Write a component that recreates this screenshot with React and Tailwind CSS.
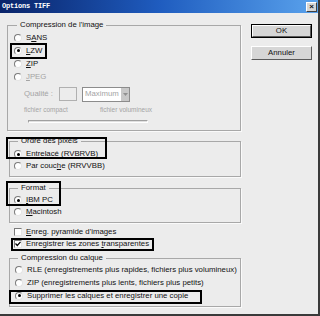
import React from "react";

function Radio({ checked, disabled, children }) {
  return (
    <div className={`flex items-center h-full gap-[4px] ${disabled ? "text-[#a4a4a4]" : ""}`}>
      <span className="w-[8px] h-[8px] shrink-0 rounded-full border border-t-[#7a7a7a] border-l-[#7a7a7a] border-r-[#e4e4e4] border-b-[#e4e4e4] bg-white flex items-center justify-center">
        {checked && <span className="w-[3px] h-[3px] rounded-full bg-black" />}
      </span>
      <span className="whitespace-nowrap">{children}</span>
    </div>
  );
}

function Check({ checked, children }) {
  return (
    <div className="flex items-center h-full gap-[4px]">
      <span className="w-[8px] h-[8px] shrink-0 border border-t-[#7a7a7a] border-l-[#7a7a7a] border-r-[#e4e4e4] border-b-[#e4e4e4] bg-white flex items-center justify-center">
        {checked && (
          <svg width="6" height="6" viewBox="0 0 6 6">
            <path d="M0.5 2.5 L2.3 4.5 L5.5 0.8" fill="none" stroke="#000" strokeWidth="1.2" />
          </svg>
        )}
      </span>
      <span className="whitespace-nowrap">{children}</span>
    </div>
  );
}

function Group({ title, className, legendClass, children }) {
  return (
    <fieldset className={`border border-[#a8a8a8] shadow-[1px_1px_0_#fafafa] ${className}`}>
      <legend className={`px-[3px] leading-[10px] bg-[#ececec] ${legendClass}`}>{title}</legend>
      {children}
    </fieldset>
  );
}

function Button({ primary, children }) {
  return (
    <div className={`h-[14px] ${primary ? "border border-black" : ""}`}>
      <div className="h-full flex items-center justify-center bg-[#d6d6d6] border border-t-white border-l-white border-r-[#5a5a5a] border-b-[#5a5a5a]">
        {children}
      </div>
    </div>
  );
}

export default function App() {
  return (
    <div className="w-[320px] h-[316px] relative overflow-hidden bg-[#ececec] border-r-2 border-b-2 border-r-[#3a3a3a] border-b-[#3a3a3a] font-['Liberation_Sans',sans-serif] text-[7.8px] text-[#111] leading-none">
      {/* title bar */}
      <div className="h-[13px] flex items-center justify-between pl-[2px] pr-[1px] bg-gradient-to-r from-[#0a246a] via-[#1f5cbf] to-[#5aa2ec]">
        <span className="font-['Liberation_Mono',monospace] font-bold text-[7px] text-white tracking-[-0.2px]">Options TIFF</span>
        <span className="w-[11px] h-[10px] flex items-center justify-center bg-[#d6d6d6] border border-t-white border-l-white border-r-[#404040] border-b-[#404040] text-[8px] font-bold">×</span>
      </div>

      <div className="flex pt-[7px]">
        {/* left column */}
        <div className="w-[241px] flex flex-col">
          <Group title="Compression de l'image" className="ml-[7px] h-[111px] pl-[6px]" legendClass="ml-[3px]">
            <div className="flex flex-col pt-[1px]">
              <div className="h-[13px]"><Radio>S<u>A</u>NS</Radio></div>
              <div className="h-[13px]"><Radio checked><u>L</u>ZW</Radio></div>
              <div className="h-[13px]"><Radio><u>Z</u>IP</Radio></div>
              <div className="h-[13px]"><Radio disabled><u>J</u>PEG</Radio></div>
              <div className="h-[14px] mt-[4px] flex items-center pl-[10px] text-[#a4a4a4]">
                <span className="w-[35px]">Qualité :</span>
                <span className="w-[18px] h-[14px] border border-[#b0b0b0] bg-[#ececec]" />
                <span className="ml-[5px] w-[48px] h-[15px] flex border border-[#8c8c8c] bg-white">
                  <span className="flex-1 flex items-center pl-[2px]">Maximum</span>
                  <span className="w-[8px] bg-[#c8c8c8] flex items-center justify-center">
                    <svg width="5" height="3" viewBox="0 0 5 3"><path d="M0 0 H5 L2.5 3 Z" fill="#909090" /></svg>
                  </span>
                </span>
              </div>
              <div className="h-[10px] mt-[4px] flex items-center pl-[10px] text-[6.5px] text-[#a4a4a4]">
                <span className="w-[76px]">fichier compact</span>
                <span>fichier volumineux</span>
              </div>
              <div className="ml-[14px] mt-[5px] w-[120px] h-[3px] bg-[#e0e0e0] border border-t-[#a0a0a0] border-l-[#a0a0a0] border-r-white border-b-white" />
            </div>
          </Group>

          <Group title="Ordre des pixels" className="ml-[9px] mt-[5px] h-[41px] pl-[4px]" legendClass="ml-[4px]">
            <div className="flex flex-col pt-[2px]">
              <div className="h-[12px]"><Radio checked><u>E</u>ntrelacé (RVBRVB)</Radio></div>
              <div className="h-[12px]"><Radio>Par couc<u>h</u>e (RRVVBB)</Radio></div>
            </div>
          </Group>

          <Group title="Format" className="ml-[9px] mt-[6px] h-[40px] pl-[4px]" legendClass="ml-[4px]">
            <div className="flex flex-col pt-[1px]">
              <div className="h-[12px]"><Radio checked><u>I</u>BM PC</Radio></div>
              <div className="h-[12px]"><Radio><u>M</u>acintosh</Radio></div>
            </div>
          </Group>

          <div className="flex flex-col pl-[14px] pt-[3px]">
            <div className="h-[12px]"><Check><u>E</u>nreg. pyramide d'images</Check></div>
            <div className="h-[12px]"><Check checked>Enregistrer les zones <u>t</u>ransparentes</Check></div>
          </div>

          <Group title="Compression du calque" className="ml-[9px] mt-[3px] h-[54px] pl-[5px]" legendClass="ml-[3px]">
            <div className="flex flex-col pt-[1px]">
              <div className="h-[12px]"><Radio>RLE (enregistrements plus rapides, fichiers plus volumineux)</Radio></div>
              <div className="h-[13px]"><Radio>ZIP (enregistrements plus lents, fichiers plus petits)</Radio></div>
              <div className="h-[13px]"><Radio checked>Supprimer les calques et enregistrer une copie</Radio></div>
            </div>
          </Group>
        </div>

        {/* right column */}
        <div className="ml-[10px] w-[61px] flex flex-col gap-[8px] pt-[4px]">
          <Button primary>OK</Button>
          <Button>Annuler</Button>
        </div>
      </div>

      {/* highlight frames */}
      <div className="absolute left-[10px] top-[43px] w-[37px] h-[16px] border-2 border-black pointer-events-none" />
      <div className="absolute left-[6px] top-[137px] w-[101px] h-[22px] border-2 border-black pointer-events-none" />
      <div className="absolute left-[6px] top-[181px] w-[55px] h-[25px] border-2 border-black pointer-events-none" />
      <div className="absolute left-[11px] top-[238px] w-[143px] h-[13px] border-2 border-black pointer-events-none" />
      <div className="absolute left-[9px] top-[290px] w-[193px] h-[14px] border-2 border-black pointer-events-none" />
    </div>
  );
}
